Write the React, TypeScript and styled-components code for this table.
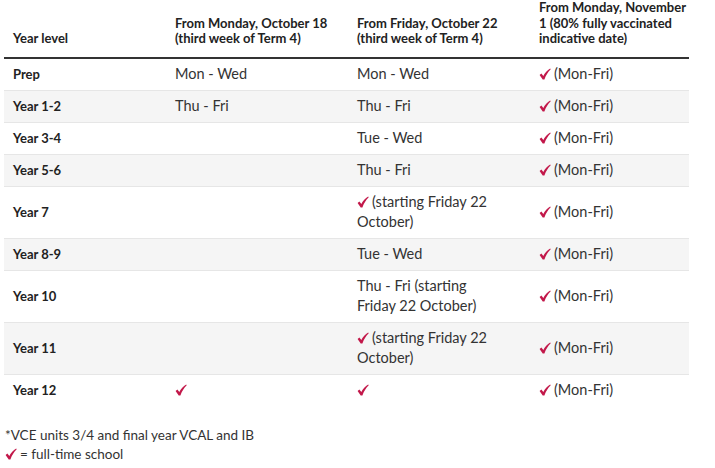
import React from "react";
import styled, { createGlobalStyle } from "styled-components";

const Global = createGlobalStyle`
  html, body { margin: 0; padding: 0; background: #fff; }
  body { font-family: Lato, "Open Sans", sans-serif; color: #333; }
  *, *::before, *::after { box-sizing: border-box; }
`;

const Page = styled.div`
  padding: 0 0 0 4px;
  width: 689px;
`;

const Table = styled.table`
  width: 685px;
  border-collapse: collapse;
  table-layout: fixed;
`;

const Th = styled.th<{ $w: number }>`
  width: ${(p) => p.$w}px;
  text-align: left;
  vertical-align: bottom;
  font-weight: 700;
  font-size: 13px;
  line-height: 15.5px;
  color: #222;
  padding: 0 9px 10px 9px;
  border-bottom: 2px solid #333;
  overflow: visible;
`;

const HeadText = styled.div<{ $w?: number }>`
  width: ${(p) => (p.$w ? `${p.$w}px` : "auto")};
`;

const Tr = styled.tr<{ $alt: boolean; $last: boolean }>`
  background: ${(p) => (p.$alt ? "#f5f5f5" : "#fff")};
  border-bottom: ${(p) => (p.$last ? "none" : "1px solid #e6e6e6")};
`;

const Label = styled.td`
  font-weight: 700;
  font-size: 13px;
  color: #222;
  padding: 5px 9px 6px 9px;
  line-height: 20px;
  vertical-align: middle;
`;

const Cell = styled.td<{ $padR?: number }>`
  font-size: 14.5px;
  line-height: 20px;
  color: #333;
  padding: 5px ${(p) => p.$padR ?? 9}px 6px 9px;
  vertical-align: middle;
`;

const CheckSvg = styled.svg`
  width: 12px;
  height: 12px;
  margin-right: 3px;
  vertical-align: -1px;
`;

const Check = () => (
  <CheckSvg viewBox="0 0 12 12">
    <path
      d="M0.6 6.9 L2.4 5.5 L4.3 8 C5.9 4.9 8.2 2.2 11.2 0.5 L11.7 1.3 C9.1 3.7 7 7.2 5.4 11.4 L3.7 11.4 Z"
      fill="#c2184a"
    />
  </CheckSvg>
);

const Notes = styled.div`
  margin-top: 20px;
  padding-left: 1px;
  font-size: 13.5px;
  line-height: 19px;
  color: #333;
`;

type Row = { label: string; a: React.ReactNode; b: React.ReactNode; c: React.ReactNode };

const mf = (
  <>
    <Check />(Mon-Fri)
  </>
);

const rows: Row[] = [
  { label: "Prep", a: "Mon - Wed", b: "Mon - Wed", c: mf },
  { label: "Year 1-2", a: "Thu - Fri", b: "Thu - Fri", c: mf },
  { label: "Year 3-4", a: "", b: "Tue - Wed", c: mf },
  { label: "Year 5-6", a: "", b: "Thu - Fri", c: mf },
  { label: "Year 7", a: "", b: <><Check />(starting Friday 22 October)</>, c: mf },
  { label: "Year 8-9", a: "", b: "Tue - Wed", c: mf },
  { label: "Year 10", a: "", b: "Thu - Fri (starting Friday 22 October)", c: mf },
  { label: "Year 11", a: "", b: <><Check />(starting Friday 22 October)</>, c: mf },
  { label: "Year 12", a: <Check />, b: <Check />, c: mf },
];

export default function App() {
  return (
    <>
      <Global />
      <Page>
        <Table>
          <thead>
            <tr>
              <Th $w={162}>Year level</Th>
              <Th $w={182}>From Monday, October 18 (third week of Term 4)</Th>
              <Th $w={182}>From Friday, October 22 (third week of Term 4)</Th>
              <Th $w={159}>
                <HeadText $w={150}>From Monday, November 1 (80% fully vaccinated indicative date)</HeadText>
              </Th>
            </tr>
          </thead>
          <tbody>
            {rows.map((r, i) => (
              <Tr key={r.label} $alt={i % 2 === 1} $last={i === rows.length - 1}>
                <Label>{r.label}</Label>
                <Cell>{r.a}</Cell>
                <Cell $padR={26}>{r.b}</Cell>
                <Cell>{r.c}</Cell>
              </Tr>
            ))}
          </tbody>
        </Table>
        <Notes>
          <div>*VCE units 3/4 and final year VCAL and IB</div>
          <div>
            <Check />= full-time school
          </div>
        </Notes>
      </Page>
    </>
  );
}
